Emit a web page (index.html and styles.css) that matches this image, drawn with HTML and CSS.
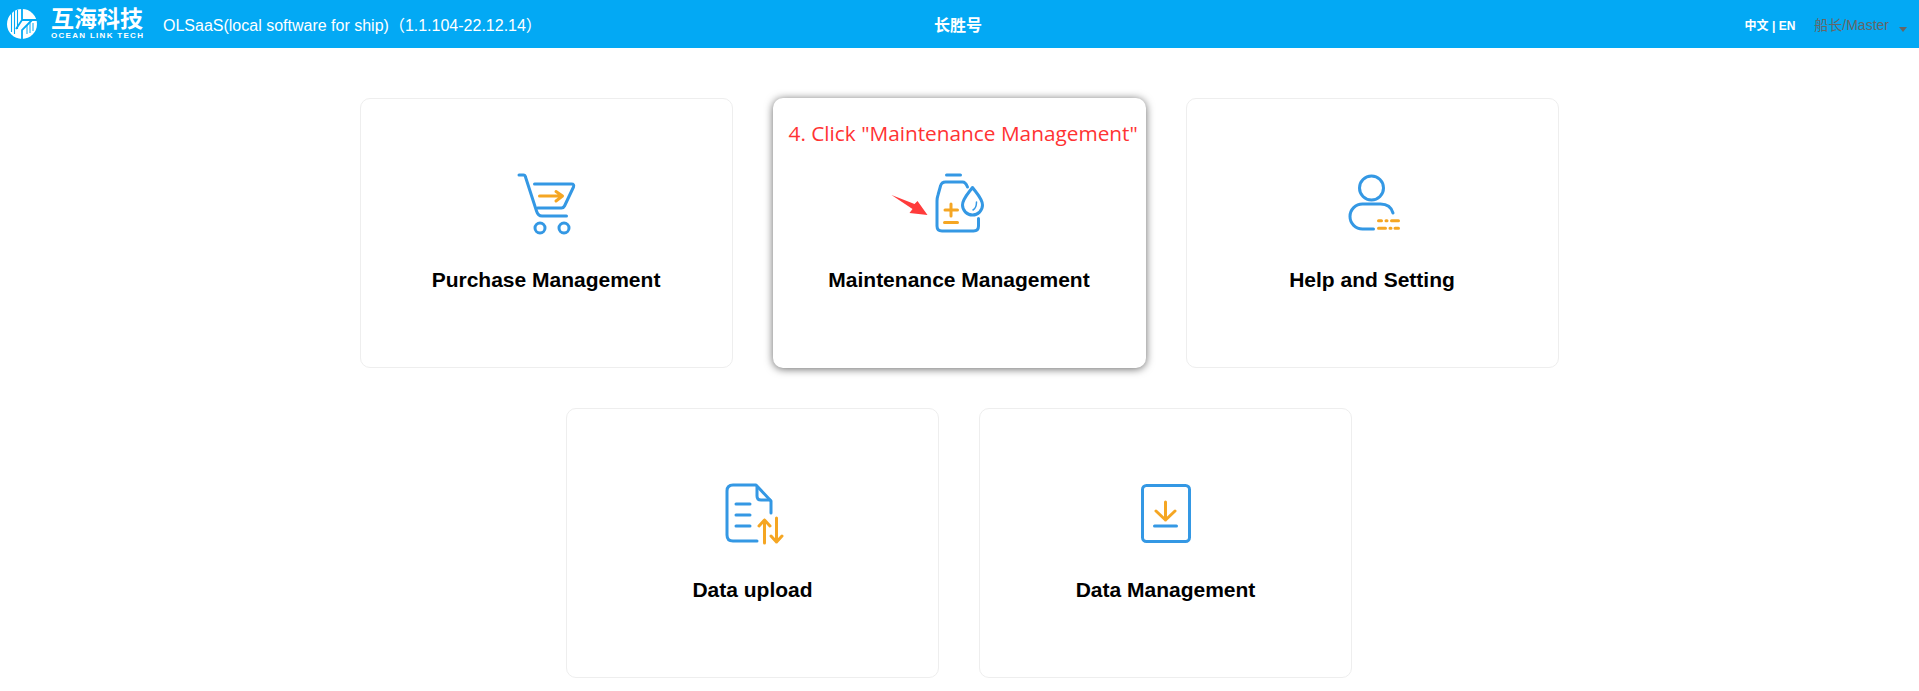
FILE: index.html
```html
<!DOCTYPE html>
<html lang="en">
<head>
    <meta charset="UTF-8">
    <title>OLSaaS</title>
    <link rel="stylesheet" href="styles.css">
</head>
<body>
    <header class="topbar">
        <div class="topbar-left">
            <div class="logo">
                <svg class="logo-mark" width="30" height="30" viewBox="0 0 30 30">
                    <circle cx="15" cy="15" r="15" fill="#fff"/>
                    <path d="M4.500 3V23M7.500 2V25M10.500 1V20" stroke="#03a9f4" stroke-width="1.1" fill="none"/>
                    <path d="M15 0V11L9 20M15 11H30M25 11 15 21V30" stroke="#03a9f4" stroke-width="1.8" fill="none"/>
                    <path d="M20 16V25M23 14V24M26 14V22" stroke="#03a9f4" stroke-width="1" fill="none"/>
                </svg>
                <div class="logo-text">
                    <span class="logo-cn">互海科技</span>
                    <span class="logo-en">OCEAN LINK TECH</span>
                </div>
            </div>
            <span class="app-name">OLSaaS(local software for ship)（1.1.104-22.12.14）</span>
        </div>
        <div class="ship-name">长胜号</div>
        <div class="topbar-right">
            <span class="lang">中文 | EN</span>
            <span class="user">船长/Master</span>
            <span class="caret"></span>
        </div>
    </header>

    <main class="menu">
        <a class="card">
            <svg class="card-icon" width="110" height="80" viewBox="-0.500 0 110 80">
                <g class="ln-blue">
                    <path d="M27.500 15H32q1.500 0 2 2L45 51q1.500 5 5.500 5H75"/>
                    <path d="M43 24H80q3 0 2 3L73 46q-1 2-3 2H46"/>
                    <circle cx="48.500" cy="68" r="5"/>
                    <circle cx="72.500" cy="68" r="5"/>
                </g>
                <g class="ln-orange">
                    <path d="M48 36H71M64.500 31.500 71 36 64.500 41"/>
                </g>
            </svg>
            <span class="card-title">Purchase Management</span>
        </a>
        <a class="card card-active">
            <span class="note">4. Click "Maintenance Management"</span>
            <svg class="card-icon" width="130" height="80" viewBox="23.500 0 130 80">
                <polygon class="red-arrow" points="21,35 44,44 47,41 57,55 39,53 42,49"/>
                <g class="ln-blue">
                    <path d="M76 15H90"/>
                    <path d="M97 27Q95 22 92 22H75Q71 22 70 26L67.500 35Q66.500 38 66.500 41V66Q66.500 71 71.500 71H103Q108 71 108 66V58.500"/>
                    <path d="M102 27.500C98 33 92 39 92 45A10 10 0 0 0 112 45C112 39 106 33 102 27.500Z"/>
                    <path d="M106 42Q106 48 102.500 50" class="thin"/>
                </g>
                <g class="ln-orange">
                    <path d="M74.500 50H87M80.500 44V56M74 62.500H87"/>
                </g>
            </svg>
            <span class="card-title">Maintenance Management</span>
        </a>
        <a class="card">
            <svg class="card-icon" width="110" height="80" viewBox="-13.500 0 110 80">
                <g class="ln-blue">
                    <circle cx="41" cy="28" r="12"/>
                    <path d="M62.500 53Q60 44 50 44H32A12.500 12.500 0 0 0 32 69H43"/>
                </g>
                <g class="ln-orange">
                    <path d="M48 60.700H51M55.500 60.700H56.500M61 60.700H68M48 68.300H55M59.500 68.300H60.500M64.500 68.300H68"/>
                </g>
            </svg>
            <span class="card-title">Help and Setting</span>
        </a>
        <a class="card">
            <svg class="card-icon" width="110" height="80" viewBox="-3 0 110 80">
                <g class="ln-blue">
                    <path d="M56 71H32Q26 71 26 65V21Q26 15 32 15H55L70 31V43"/>
                    <path d="M56 17V26Q56 30 60 30H69"/>
                    <path d="M35 34H49M35 45H49M35 56H49"/>
                </g>
                <g class="ln-orange">
                    <path d="M63.500 73V50M58 56 63.500 50 69 56M75.500 48V72M70 66 75.500 72 81 66"/>
                </g>
            </svg>
            <span class="card-title">Data upload</span>
        </a>
        <a class="card">
            <svg class="card-icon" width="110" height="80" viewBox="1 0 110 80">
                <g class="ln-blue">
                    <rect x="32.500" y="15.500" width="47" height="56" rx="4"/>
                    <path d="M44.500 56H66.500"/>
                </g>
                <g class="ln-orange">
                    <path d="M55.500 32V50M46 41 55.500 50 65 41"/>
                </g>
            </svg>
            <span class="card-title">Data Management</span>
        </a>
    </main>
</body>
</html>
```

FILE: styles.css
```css
* {
    margin: 0;
    padding: 0;
    box-sizing: border-box;
}
body {
    font-family: "Liberation Sans", "Noto Sans CJK SC", sans-serif;
    background: #fff;
    color: #000;
}
.topbar {
    height: 48px;
    background: #03a9f4;
    color: #fff;
    display: grid;
    grid-template-columns: 1fr auto 1fr;
    align-items: center;
    padding: 0 12px 0 7px;
}
.topbar-left {
    display: flex;
    align-items: center;
    gap: 20px;
}
.logo {
    display: flex;
    align-items: center;
    gap: 14px;
}
.logo-text {
    display: flex;
    flex-direction: column;
    width: 92px;
}
.logo-cn {
    font-size: 23px;
    line-height: 24px;
    font-weight: 700;
    white-space: nowrap;
}
.logo-en {
    font-size: 8px;
    line-height: 10px;
    font-weight: 700;
    letter-spacing: 1.3px;
    white-space: nowrap;
}
.app-name {
    font-size: 16px;
    white-space: nowrap;
}
.ship-name {
    font-size: 16px;
    font-weight: 700;
    padding-left: 2px;
}
.topbar-right {
    display: flex;
    align-items: center;
    justify-content: flex-end;
    font-size: 14px;
}
.lang {
    font-size: 12px;
    font-weight: 700;
    margin-right: 19px;
}
.user {
    color: #666;
}
.caret {
    width: 0;
    height: 0;
    margin: 11px 0 0 10px;
    border: 4px solid transparent;
    border-top: 5px solid #666;
    border-bottom: 0;
}

.menu {
    width: 1200px;
    margin: 0 auto;
    padding: 50px 1px 0 0;
    display: flex;
    flex-wrap: wrap;
    justify-content: center;
    gap: 40px;
}
.card {
    position: relative;
    width: 373px;
    height: 270px;
    background: #fff;
    border: 1px solid #eee;
    border-radius: 10px;
    padding-top: 61px;
    display: flex;
    flex-direction: column;
    align-items: center;
    cursor: pointer;
}
.card-active {
    border-color: transparent;
    box-shadow: 0 1px 8px rgba(0, 0, 0, 0.6);
}
.card-icon {
    display: block;
    overflow: visible;
}
.card-title {
    margin-top: 28px;
    font-size: 21px;
    line-height: 24px;
    font-weight: 700;
}
.note {
    position: absolute;
    top: 20px;
    left: 15px;
    font-family: "Open Sans", sans-serif;
    font-size: 20.8px;
    line-height: 28px;
    color: #ff3333;
    white-space: nowrap;
}
.ln-blue,
.ln-orange {
    fill: none;
    stroke-width: 3;
    stroke-linecap: round;
    stroke-linejoin: round;
}
.ln-blue {
    stroke: #3498e4;
}
.ln-orange {
    stroke: #f5a623;
}
.thin {
    stroke-width: 1.5;
}
.red-arrow {
    fill: #ff3b3b;
}
```
